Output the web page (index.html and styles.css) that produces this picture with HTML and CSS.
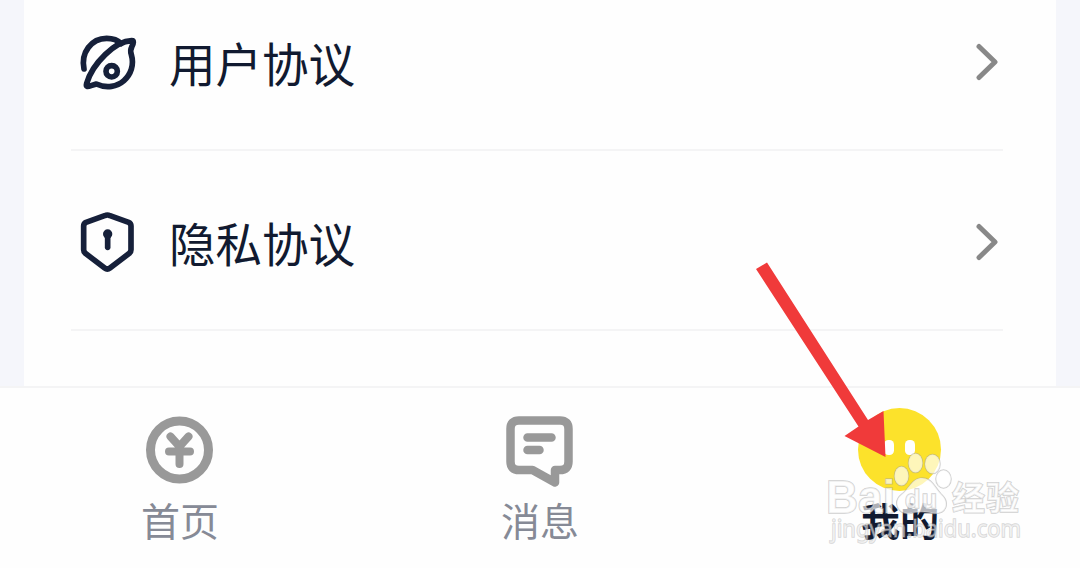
FILE: index.html
```html
<!DOCTYPE html>
<html lang="zh-CN">
<head>
<meta charset="utf-8">
<title>我的</title>
<link rel="stylesheet" href="styles.css">
</head>
<body>
<div class="screen">
  <main class="content">
    <section class="card">
      <a class="row">
        <svg class="row-icon" viewBox="54 30 180 186">
          <path d="M72 144C62 95 94 52 140 52C160 52 174 58 183 68"/>
          <path d="M215 59C165 60 98 127 80 187C77 198 82 198 93 194L109 189C172 218 232 162 214 101C210 91 211 86 216 76C221 65 222 59 215 59Z"/>
          <circle cx="155" cy="151" r="17"/>
        </svg>
        <span class="row-title">用户协议</span>
        <svg class="chevron" viewBox="0 0 24 40"><path d="M3 4.500L19 20L3 35.500"/></svg>
      </a>
      <a class="row">
        <svg class="row-icon shield" viewBox="54 30 180 192">
          <path d="M134 47Q142 43 150 47L206 67Q213 70 213 78V149Q213 155 208 160L150 204Q142 210 134 204L76 160Q71 155 71 149V78Q71 70 78 67Z"/>
          <circle class="solid" cx="143" cy="102" r="14"/>
          <path d="M143 103V142"/>
        </svg>
        <span class="row-title">隐私协议</span>
        <svg class="chevron" viewBox="0 0 24 40"><path d="M3 4.500L19 20L3 35.500"/></svg>
      </a>
    </section>
  </main>
  <nav class="tabs">
    <a class="tab">
      <svg class="tab-icon" viewBox="0 0 84 84">
        <circle class="ring" cx="41.500" cy="42" r="29"/>
        <path class="yen" d="M32.500 28.500L41.500 38.500L50.500 28.500M31 43.500H52M41.500 40V56"/>
      </svg>
      <span class="tab-label">首页</span>
    </a>
    <a class="tab">
      <svg class="tab-icon" viewBox="0 0 84 84">
        <path class="bubble" d="M57 62H62Q70.500 62 70.500 53.500V21Q70.500 12.500 62 12.500H21Q12.500 12.500 12.500 21V53.500Q12.500 62 21 62H34.500L57 74.500Z"/>
        <path class="lines" d="M29.500 29.500H53.500M29.500 42H41.500"/>
      </svg>
      <span class="tab-label">消息</span>
    </a>
    <a class="tab active">
      <svg class="tab-icon" viewBox="0 0 84 84">
        <circle class="face" cx="41.500" cy="41.500" r="41.500"/>
        <rect class="eye" x="26" y="32" width="10" height="15" rx="4.500"/>
        <rect class="eye" x="47" y="32" width="10" height="15" rx="4.500"/>
      </svg>
      <span class="tab-label">我的</span>
    </a>
  </nav>
  <svg class="arrow" viewBox="740 250 180 220">
    <path d="M756 269L767 262.500L868 420L883.500 411L885.500 457L844.500 436L858.500 426.500Z"/>
  </svg>
  <svg class="watermark" viewBox="820 445 210 110">
    <text class="brand" x="826" y="513" textLength="69" lengthAdjust="spacingAndGlyphs">Bai</text>
    <path class="paw" d="M922 478C912 478 909 489 902 494C892 502 898 514 909 513.500Q922 510 934 513.500C947 514 950 502 941 494C935 488 932 478 922 478Z"/>
    <ellipse class="paw" cx="901.500" cy="476" rx="7" ry="9.500"/>
    <ellipse class="paw" cx="915.500" cy="463" rx="7" ry="9.500"/>
    <ellipse class="paw" cx="932.500" cy="464" rx="7.500" ry="9.500"/>
    <ellipse class="paw" cx="943.500" cy="479" rx="7.500" ry="9"/>
    <text class="du" x="905" y="508" textLength="32">du</text>
    <text class="brand-cn" x="952" y="510" textLength="67">经验</text>
    <text class="site" x="831" y="537" textLength="190" lengthAdjust="spacingAndGlyphs">jingyan.baidu.com</text>
  </svg>
</div>
</body>
</html>
```
FILE: styles.css
```css
body { margin: 0; background: #fefefe; font-family: "Noto Sans CJK SC", sans-serif; }
.screen { position: relative; width: 1080px; height: 568px; overflow: hidden; display: flex; flex-direction: column; }
.content { height: 386px; box-sizing: border-box; padding: 0 24px; background: #f5f6fb; overflow: hidden; }
.card { height: 100%; box-sizing: border-box; padding: 0 53px 0 47px; background: #fefefe; display: flex; flex-direction: column; }
.row { flex: none; height: 180px; box-sizing: border-box; border-bottom: 2px solid #f4f4f5; display: flex; align-items: center; padding: 4px 3px 0 7px; }
.row:first-child { height: 151px; padding-top: 0; padding-bottom: 25px; }
.row-icon { width: 60px; height: 62px; fill: none; stroke: #16203a; stroke-width: 17; stroke-linecap: round; stroke-linejoin: round; }
.row-icon.shield { height: 64px; }
.row-icon .solid { fill: #16203a; stroke: none; }
.row-title { flex: 1; margin-left: 31px; font-size: 46.5px; line-height: 64px; color: #111a30; }
.chevron { width: 24px; height: 40px; fill: none; stroke: #888; stroke-width: 5; stroke-linecap: round; stroke-linejoin: round; }
.tabs { flex: 1; border-top: 2px solid #f4f4f5; display: grid; grid-template-columns: repeat(3, 1fr); }
.tab { display: flex; flex-direction: column; align-items: center; padding-top: 20px; }
.tab-icon { width: 84px; height: 84px; fill: none; stroke: #999; stroke-linecap: round; stroke-linejoin: round; }
.ring { stroke-width: 9; }
.yen { stroke-width: 8; }
.bubble { stroke-width: 8.5; }
.lines { stroke-width: 8.5; }
.face { fill: #fce22b; stroke: none; }
.eye { fill: #fff; stroke: none; }
.tab-label { font-size: 39px; line-height: 54px; color: #868a96; }
.active .tab-label { color: #111a30; font-weight: 700; }
.arrow { position: absolute; left: 740px; top: 250px; width: 180px; height: 220px; fill: #f03a3a; }
.watermark { position: absolute; left: 820px; top: 445px; width: 210px; height: 110px; fill: rgba(255,255,255,.68); stroke: rgba(160,160,160,.5); stroke-width: 1.5; paint-order: stroke; font-family: "Liberation Sans", "Noto Sans CJK SC", sans-serif; }
.brand { font-size: 46px; font-weight: bold; }
.du { font-size: 25px; font-weight: bold; }
.brand-cn { font-family: "Noto Sans CJK SC", sans-serif; font-size: 33px; font-weight: bold; }
.site { font-family: "Noto Sans", sans-serif; font-size: 23.5px; fill: rgba(255,255,255,.5); stroke: rgba(160,160,160,.42); }
```
